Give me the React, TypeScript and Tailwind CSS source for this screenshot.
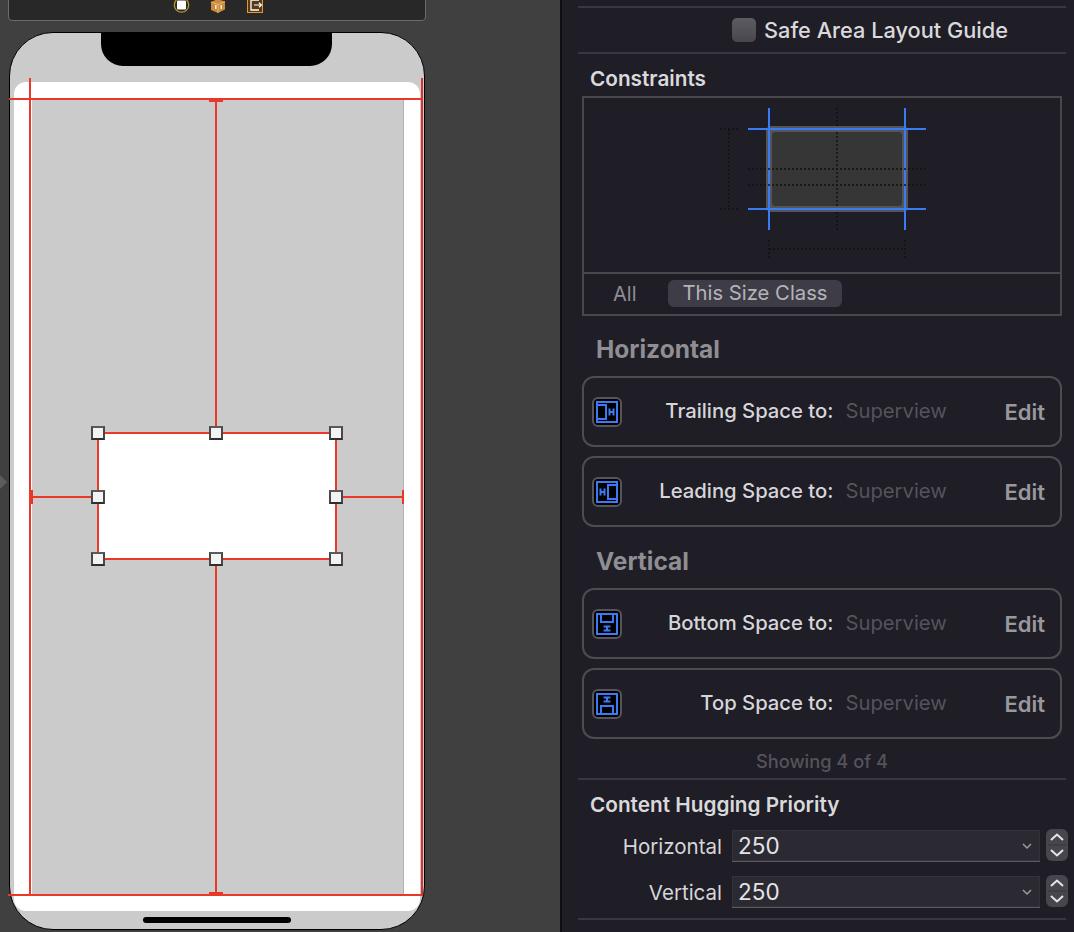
import React from 'react';

const RED = '#e9372a';
const HANDLES = [
  [98, 433], [216, 433], [336, 433],
  [98, 497], [336, 497],
  [98, 559], [216, 559], [336, 559],
];

function Handle({ x, y }: { x: number; y: number }) {
  return (
    <div
      className="absolute w-[14px] h-[14px] border-2 border-t-[#5a5a5a] border-x-[#484848] border-b-[#2e2e2e] bg-[#f3f3f3]"
      style={{ left: x - 7, top: y - 7 }}
    />
  );
}

function Line({ x, y, w, h, color = RED }: { x: number; y: number; w: number; h: number; color?: string }) {
  return <div className="absolute" style={{ left: x, top: y, width: w, height: h, backgroundColor: color }} />;
}

function Toolbar() {
  return (
    <div className="absolute left-[8px] top-[-4px] w-[418px] h-[25px] bg-[#282828] border border-[#6b6b6b] rounded-b-[4px]">
      <svg className="absolute left-[164px] top-[-1px]" width="110" height="20" viewBox="0 0 110 20">
        <circle cx="8.5" cy="9" r="7.2" fill="#282828" stroke="#b8962e" strokeWidth="1.3" />
        <rect x="4" y="4.5" width="9" height="9" rx="1" fill="#ffffff" />
        <path d="M38 6 L44.5 3 L52 5.5 L52 13.5 L45 17 L38 14 Z" fill="#c98a3c" />
        <path d="M38 6 L45 8.5 L52 5.5 M45 8.5 L45 17" fill="none" stroke="#f0c080" strokeWidth="0.8" />
        <rect x="42" y="9" width="1.5" height="4" fill="#fff" opacity="0.8" />
        <rect x="47.5" y="9" width="1.5" height="4" fill="#fff" opacity="0.8" />
        <rect x="74.5" y="1" width="15" height="15.5" fill="#5a3a14" stroke="#e09a3a" strokeWidth="1" />
        <path d="M86 4 H78 V14 H86" fill="none" stroke="#ffffff" strokeWidth="1.3" />
        <path d="M81 9 H88 M86 6.8 L88.5 9 L86 11.2" fill="none" stroke="#ffffff" strokeWidth="1.2" />
      </svg>
    </div>
  );
}

function Device() {
  return (
    <>
      <div className="absolute left-[9px] top-[32px] w-[416px] h-[898px] bg-[#cbcbcb] border border-black rounded-[44px] overflow-hidden">
        <div className="absolute left-[91px] top-[-1px] w-[231px] h-[34px] bg-black rounded-b-[22px]" />
      </div>
      <div className="absolute left-[14px] top-[82px] w-[406px] h-[829px] bg-white rounded-[12px]" />
      <div className="absolute left-[32px] top-[100px] w-[372px] h-[794px] bg-[#cbcbcb] border-r border-[#b0b0b0]" />
      <div className="absolute left-[143px] top-[917px] w-[148px] h-[6px] bg-black rounded-full" />

      {/* selected view */}
      <div className="absolute left-[97px] top-[432px] w-[240px] h-[128px] bg-white border-2 border-[#e9372a]" />

      {/* constraints */}
      <Line x={9} y={98} w={414} h={2} />
      <Line x={8} y={894} w={415} h={2} />
      <Line x={29} y={78} w={2} h={817} />
      <Line x={421} y={78} w={2} h={817} color="#d5352a" />
      <Line x={215} y={100} w={2} h={333} />
      <Line x={209} y={99} w={14} h={3} />
      <Line x={215} y={560} w={2} h={334} />
      <Line x={209} y={892} w={14} h={3} />
      <Line x={31} y={496} w={67} h={2} />
      <Line x={30} y={490} w={3} h={14} />
      <Line x={337} y={496} w={66} h={2} />
      <Line x={402} y={490} w={2} h={14} />

      {HANDLES.map(([x, y]) => (
        <Handle key={`${x}-${y}`} x={x} y={y} />
      ))}

      {/* disclosure marker at the editor's edge */}
      <div className="absolute left-[-5px] top-[477px] w-[10px] h-[10px] rotate-45 bg-[#5c5c5c]" />
    </>
  );
}

function ConstraintDiagram() {
  const dot = { stroke: '#121215', strokeWidth: 1.5, strokeDasharray: '2 2', fill: 'none' };
  const blue = '#3a7bf5';
  return (
    <svg width="220" height="170" viewBox="0 0 220 170">
      {/* offsets: x - 720, y - 100 */}
      <path d="M0 29 H18 M0 109 H18 M9 29 V109" {...dot} />
      <path d="M49 140 V158 M185 140 V158 M49 149 H185" {...dot} />
      <rect x="46" y="26" width="142" height="86" rx="5" fill="#555555" />
      <rect x="52" y="32" width="130" height="74" rx="3" fill="#363636" />
      <path d="M117 8 V130 M28 69 H206 M28 85 H206" {...dot} />
      <path d="M49 8 V130 M185 8 V130 M28 29 H206 M28 109 H206" stroke={blue} strokeWidth="2" fill="none" />
      <path d="M48 69 H50 M48 85 H50 M184 69 H186 M184 85 H186" stroke="#111114" strokeWidth="1.5" />
    </svg>
  );
}

type IconKind = 'trailing' | 'leading' | 'bottom' | 'top';

function ConstraintIcon({ kind }: { kind: IconKind }) {
  const inner: Record<IconKind, React.ReactNode> = {
    trailing: <path d="M5 8 H14 V22 H5 M17.5 11.5 V18.5 M21.5 11.5 V18.5 M17.5 15 H21.5" />,
    leading: <path d="M25 8 H16 V22 H25 M8.5 11.5 V18.5 M12.5 11.5 V18.5 M8.5 15 H12.5" />,
    bottom: <path d="M9 5 V13 H21 V5 M11.5 17.5 H18.5 M11.5 21.5 H18.5 M15 17.5 V21.5" />,
    top: <path d="M9 25 V17 H21 V25 M11.5 8.5 H18.5 M11.5 12.5 H18.5 M15 8.5 V12.5" />,
  };
  return (
    <svg width="30" height="30" viewBox="0 0 30 30" className="shrink-0">
      <rect x="1" y="1" width="28" height="28" rx="5" fill="#000000" stroke="#55555a" strokeWidth="2" />
      <g fill="none" stroke="#3a7bf5" strokeWidth="2">
        <rect x="5" y="5" width="20" height="20" />
        {inner[kind]}
      </g>
    </svg>
  );
}

function ConstraintRow({ kind, label }: { kind: IconKind; label: string }) {
  return (
    <div className="h-[71px] ml-[20px] mr-[12px] flex items-center pl-[8px] pr-[15px] rounded-[12px] border-2 border-[#4d4c52]">
      <ConstraintIcon kind={kind} />
      <div className="flex-1 text-right text-[20.25px] font-medium text-[#d6d6d9] leading-none">{label}</div>
      <div className="w-[171px] pl-[12px] text-[20.25px] text-[#55535b] leading-none">Superview</div>
      <div className="text-[22px] font-semibold text-[#98989d] leading-none">Edit</div>
    </div>
  );
}

function SectionTitle({ children }: { children: React.ReactNode }) {
  return <div className="pl-[34px] text-[24.5px] font-bold text-[#8e8e93] leading-none">{children}</div>;
}

function PriorityRow({ label }: { label: string }) {
  return (
    <div className="flex items-center h-[32px]">
      <div className="w-[170px] pr-[10px] pt-[2px] text-right text-[20.5px] text-[#d6d6d9] leading-none">{label}</div>
      <div className="w-[308px] h-[32px] flex items-center justify-between pl-[6px] pr-[6px] pt-[1px] bg-[#2b2a33] border-b border-[#5a5a60] shadow-[inset_0_0_0_1px_#34333c]">
        <span className="text-[22.5px] text-[#e4e4e6] leading-none">250</span>
        <svg width="14" height="14" viewBox="0 0 14 14">
          <path d="M3 5 L7 9 L11 5" fill="none" stroke="#9a9a9f" strokeWidth="1.5" />
        </svg>
      </div>
      <div className="ml-[6px] -mt-[2px] w-[22px] h-[32px] rounded-[6px] bg-[#47464e]">
        <svg width="22" height="32" viewBox="0 0 22 32">
          <path d="M5 11 L11 5.5 L17 11 M5 21 L11 26.5 L17 21" fill="none" stroke="#e6e6e8" strokeWidth="2" />
          <path d="M2 16 H20" stroke="#37363d" strokeWidth="1" />
        </svg>
      </div>
    </div>
  );
}

function Divider() {
  return <div className="h-[2px] ml-[16px] mr-[8px] bg-[#393840]" />;
}

function Inspector() {
  return (
    <div className="flex-1 h-full bg-[#1f1d26] flex flex-col overflow-hidden">
      <div className="h-[6px]" />
      <Divider />
      <div className="h-[44px] pl-[170px] flex items-center gap-[8px]">
        <div className="w-[24px] h-[24px] rounded-[5px] bg-gradient-to-b from-[#5c5c62] to-[#47474d]" />
        <span className="pt-[1px] text-[21.75px] font-medium text-[#d9d9dc] leading-none">Safe Area Layout Guide</span>
      </div>
      <Divider />
      <div className="h-[42px] pl-[28px] pt-[8px] flex items-center text-[20.75px] font-semibold text-[#d9d9dc] leading-none">
        Constraints
      </div>
      <div className="ml-[20px] mr-[12px] h-[220px] border-2 border-[#48474c] flex flex-col">
        <div className="h-[176px] border-b-2 border-[#48474c] relative overflow-hidden">
          <div className="absolute left-[136px] top-[2px]">
            <ConstraintDiagram />
          </div>
        </div>
        <div className="flex-1 flex items-center pl-[29px] pb-[1px]">
          <span className="w-[55px] text-[20px] text-[#8e8e93] leading-none">All</span>
          <span className="w-[174px] h-[27px] rounded-[6px] bg-[#3e3d47] text-[20.25px] text-[#b4b4b9] leading-none flex items-center justify-center">
            This Size Class
          </span>
        </div>
      </div>

      <div className="h-[60px] flex items-end pb-[15px]">
        <SectionTitle>Horizontal</SectionTitle>
      </div>
      <div className="flex flex-col gap-[9px]">
        <ConstraintRow kind="trailing" label="Trailing Space to:" />
        <ConstraintRow kind="leading" label="Leading Space to:" />
      </div>
      <div className="h-[61px] flex items-center pt-[7px]">
        <SectionTitle>Vertical</SectionTitle>
      </div>
      <div className="flex flex-col gap-[9px]">
        <ConstraintRow kind="bottom" label="Bottom Space to:" />
        <ConstraintRow kind="top" label="Top Space to:" />
      </div>
      <div className="h-[39px] ml-[16px] mr-[8px] pt-[5px] flex items-center justify-center text-[18.25px] font-medium text-[#55535b] leading-none">
        Showing 4 of 4
      </div>
      <Divider />
      <div className="h-[50px] pl-[28px] flex items-center text-[20.75px] font-semibold text-[#d9d9dc] leading-none">
        Content Hugging Priority
      </div>
      <div className="flex flex-col gap-[14px]">
        <PriorityRow label="Horizontal" />
        <PriorityRow label="Vertical" />
      </div>
      <div className="h-[10px]" />
      <Divider />
    </div>
  );
}

export default function App() {
  return (
    <div className="w-[1074px] h-[932px] flex overflow-hidden bg-[#404040] font-['Inter','Liberation_Sans',sans-serif]">
      <div className="relative w-[560px] h-full shrink-0 overflow-hidden">
        <Toolbar />
        <Device />
      </div>
      <div className="w-[2px] h-full shrink-0 bg-[#0e0e10]" />
      <Inspector />
    </div>
  );
}
